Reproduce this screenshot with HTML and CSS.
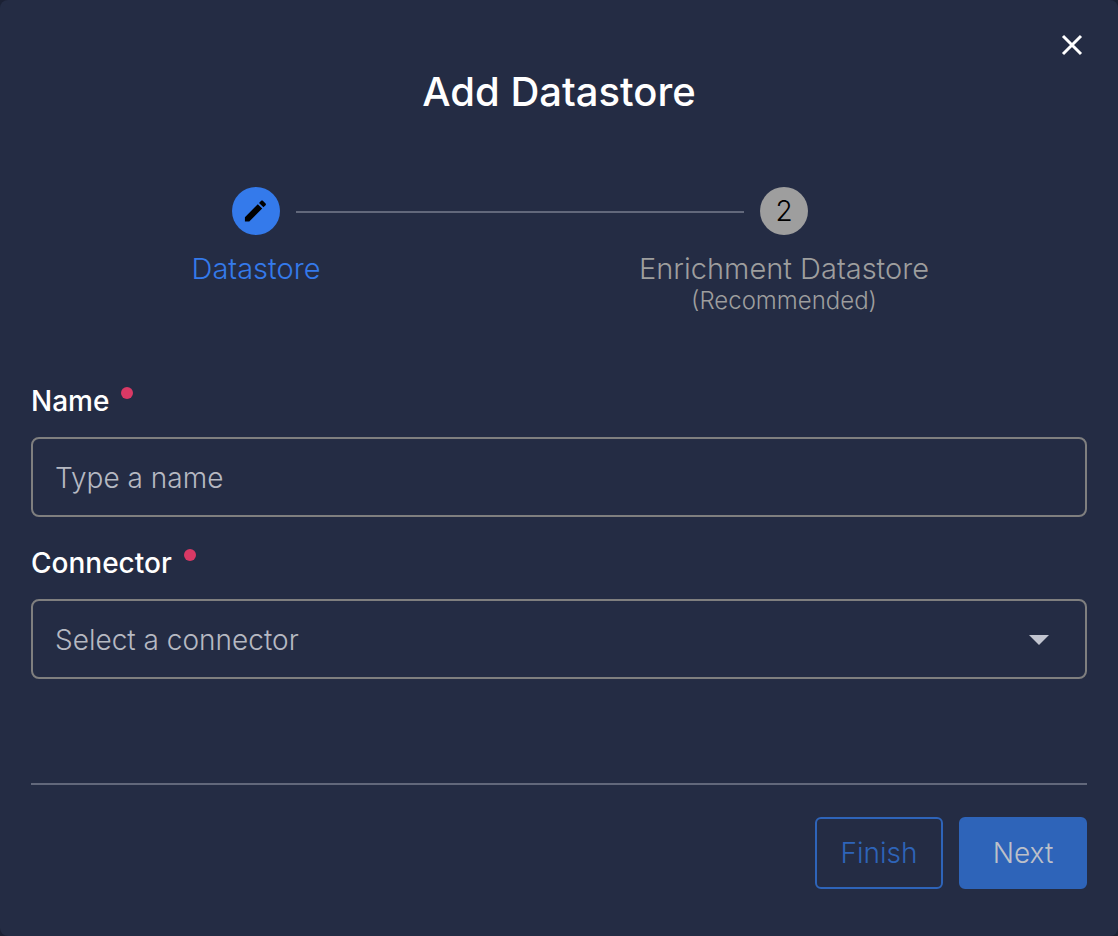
FILE: index.html
```html
<!DOCTYPE html>
<html lang="en">
<head>
<meta charset="utf-8">
<meta name="viewport" content="width=device-width, initial-scale=1">
<title>Add Datastore</title>
<link rel="stylesheet" href="styles.css">
</head>
<body>
<main class="dialog">
  <header class="dialog-header">
    <button class="close" type="button" aria-label="Close">
      <svg width="22" height="22" viewBox="0 0 22 22" aria-hidden="true"><path d="M2 2l18 18M20 2L2 20" fill="none" stroke="currentColor" stroke-width="3"/></svg>
    </button>
    <h1 class="title">Add Datastore</h1>
  </header>

  <ol class="stepper">
    <li class="step step-active" aria-current="step">
      <span class="badge">
        <svg width="28" height="28" viewBox="0 0 24 24" aria-hidden="true"><path d="M20.2 7.04c.39-.39.39-1.04 0-1.41l-2.34-2.34c-.37-.39-1.02-.39-1.41 0l-1.84 1.83 3.75 3.75M2.5 17.25V21h3.75L17.3 9.93l-3.75-3.75L2.5 17.25z" fill="currentColor"/></svg>
      </span>
      <span class="step-label">Datastore</span>
    </li>
    <li class="connector" role="presentation"></li>
    <li class="step">
      <span class="badge">2</span>
      <span class="step-label">Enrichment Datastore</span>
      <small class="step-note">(Recommended)</small>
    </li>
  </ol>

  <form class="form">
    <div class="field">
      <label class="label" for="name">Name<span class="required"></span></label>
      <input class="control" id="name" type="text" placeholder="Type a name" required>
    </div>
    <div class="field">
      <label class="label" for="connector">Connector<span class="required"></span></label>
      <div class="select">
        <select class="control" id="connector" required>
          <option value="">Select a connector</option>
        </select>
        <svg class="arrow" width="20" height="10" viewBox="0 0 20 10" aria-hidden="true"><path d="M0 0h20L10 10z" fill="currentColor"/></svg>
      </div>
    </div>
    <footer class="actions">
      <button class="button button-outline" type="button">Finish</button>
      <button class="button button-solid" type="button">Next</button>
    </footer>
  </form>
</main>
</body>
</html>
```
FILE: styles.css
```css
* {
  box-sizing: border-box;
}

body {
  margin: 0;
  background: #1b2134;
  color: #fff;
  font-family: Inter, "Open Sans", sans-serif;
  font-size: 28px;
  font-weight: 300;
  line-height: 32px;
}

.dialog {
  min-height: 100vh;
  padding: 32px 31px 47px;
  border-radius: 8px;
  background: #242c44;
}

.dialog-header {
  display: flex;
  flex-direction: column;
}

.close {
  display: flex;
  align-self: flex-end;
  padding: 2px 4px;
  border: 0;
  background: none;
  color: #fff;
}

.title {
  margin: 10px 0 0;
  font-size: 40px;
  font-weight: 500;
  line-height: 48px;
  text-align: center;
}

.stepper {
  display: grid;
  grid-template-columns: 48px 1fr 48px;
  gap: 16px;
  margin: 71px 0 0;
  padding: 0 279px 0 201px;
  list-style: none;
}

.step {
  display: flex;
  flex-direction: column;
  align-items: center;
  color: #9e9e9e;
  white-space: nowrap;
}

.step-active {
  color: #347aeb;
}

.badge {
  display: flex;
  align-items: center;
  justify-content: center;
  width: 48px;
  height: 48px;
  margin-bottom: 18px;
  border-radius: 50%;
  background: #9e9e9e;
  color: #000;
}

.step-active .badge {
  background: #347aeb;
}

.step-label {
  font-size: 29px;
}

.step-note {
  font-size: 24px;
}

.connector {
  height: 2px;
  margin-top: 24px;
  background: #62687b;
}

.form {
  margin-top: 68px;
}

.field {
  margin-bottom: 30px;
}

.label {
  display: flex;
  gap: 12px;
  margin-bottom: 20px;
  font-weight: 500;
}

.required {
  width: 12px;
  height: 12px;
  margin-top: 2px;
  border-radius: 50%;
  background: #d93965;
}

.control {
  display: block;
  width: 100%;
  height: 80px;
  padding: 2px 22px 0;
  border: 2px solid #7f7f7f;
  border-radius: 8px;
  background: transparent;
  color: #b6b9c2;
  font: inherit;
  appearance: none;
}

.control::placeholder {
  color: #b6b9c2;
  opacity: 1;
}

.select {
  display: grid;
  align-items: center;
}

.select > * {
  grid-area: 1 / 1;
}

.arrow {
  justify-self: end;
  margin-top: 2px;
  margin-right: 38px;
  color: #c2c5d0;
  pointer-events: none;
}

.actions {
  display: flex;
  justify-content: flex-end;
  gap: 16px;
  margin-top: 104px;
  padding-top: 32px;
  border-top: 2px solid #62687b;
}

.button {
  min-width: 128px;
  height: 72px;
  padding: 0 20px;
  border: 2px solid #2e64b9;
  border-radius: 6px;
  font: inherit;
}

.button-outline {
  background: transparent;
  color: #2e64b9;
}

.button-solid {
  background: #2e64b9;
  color: #bdc0c9;
}
```
